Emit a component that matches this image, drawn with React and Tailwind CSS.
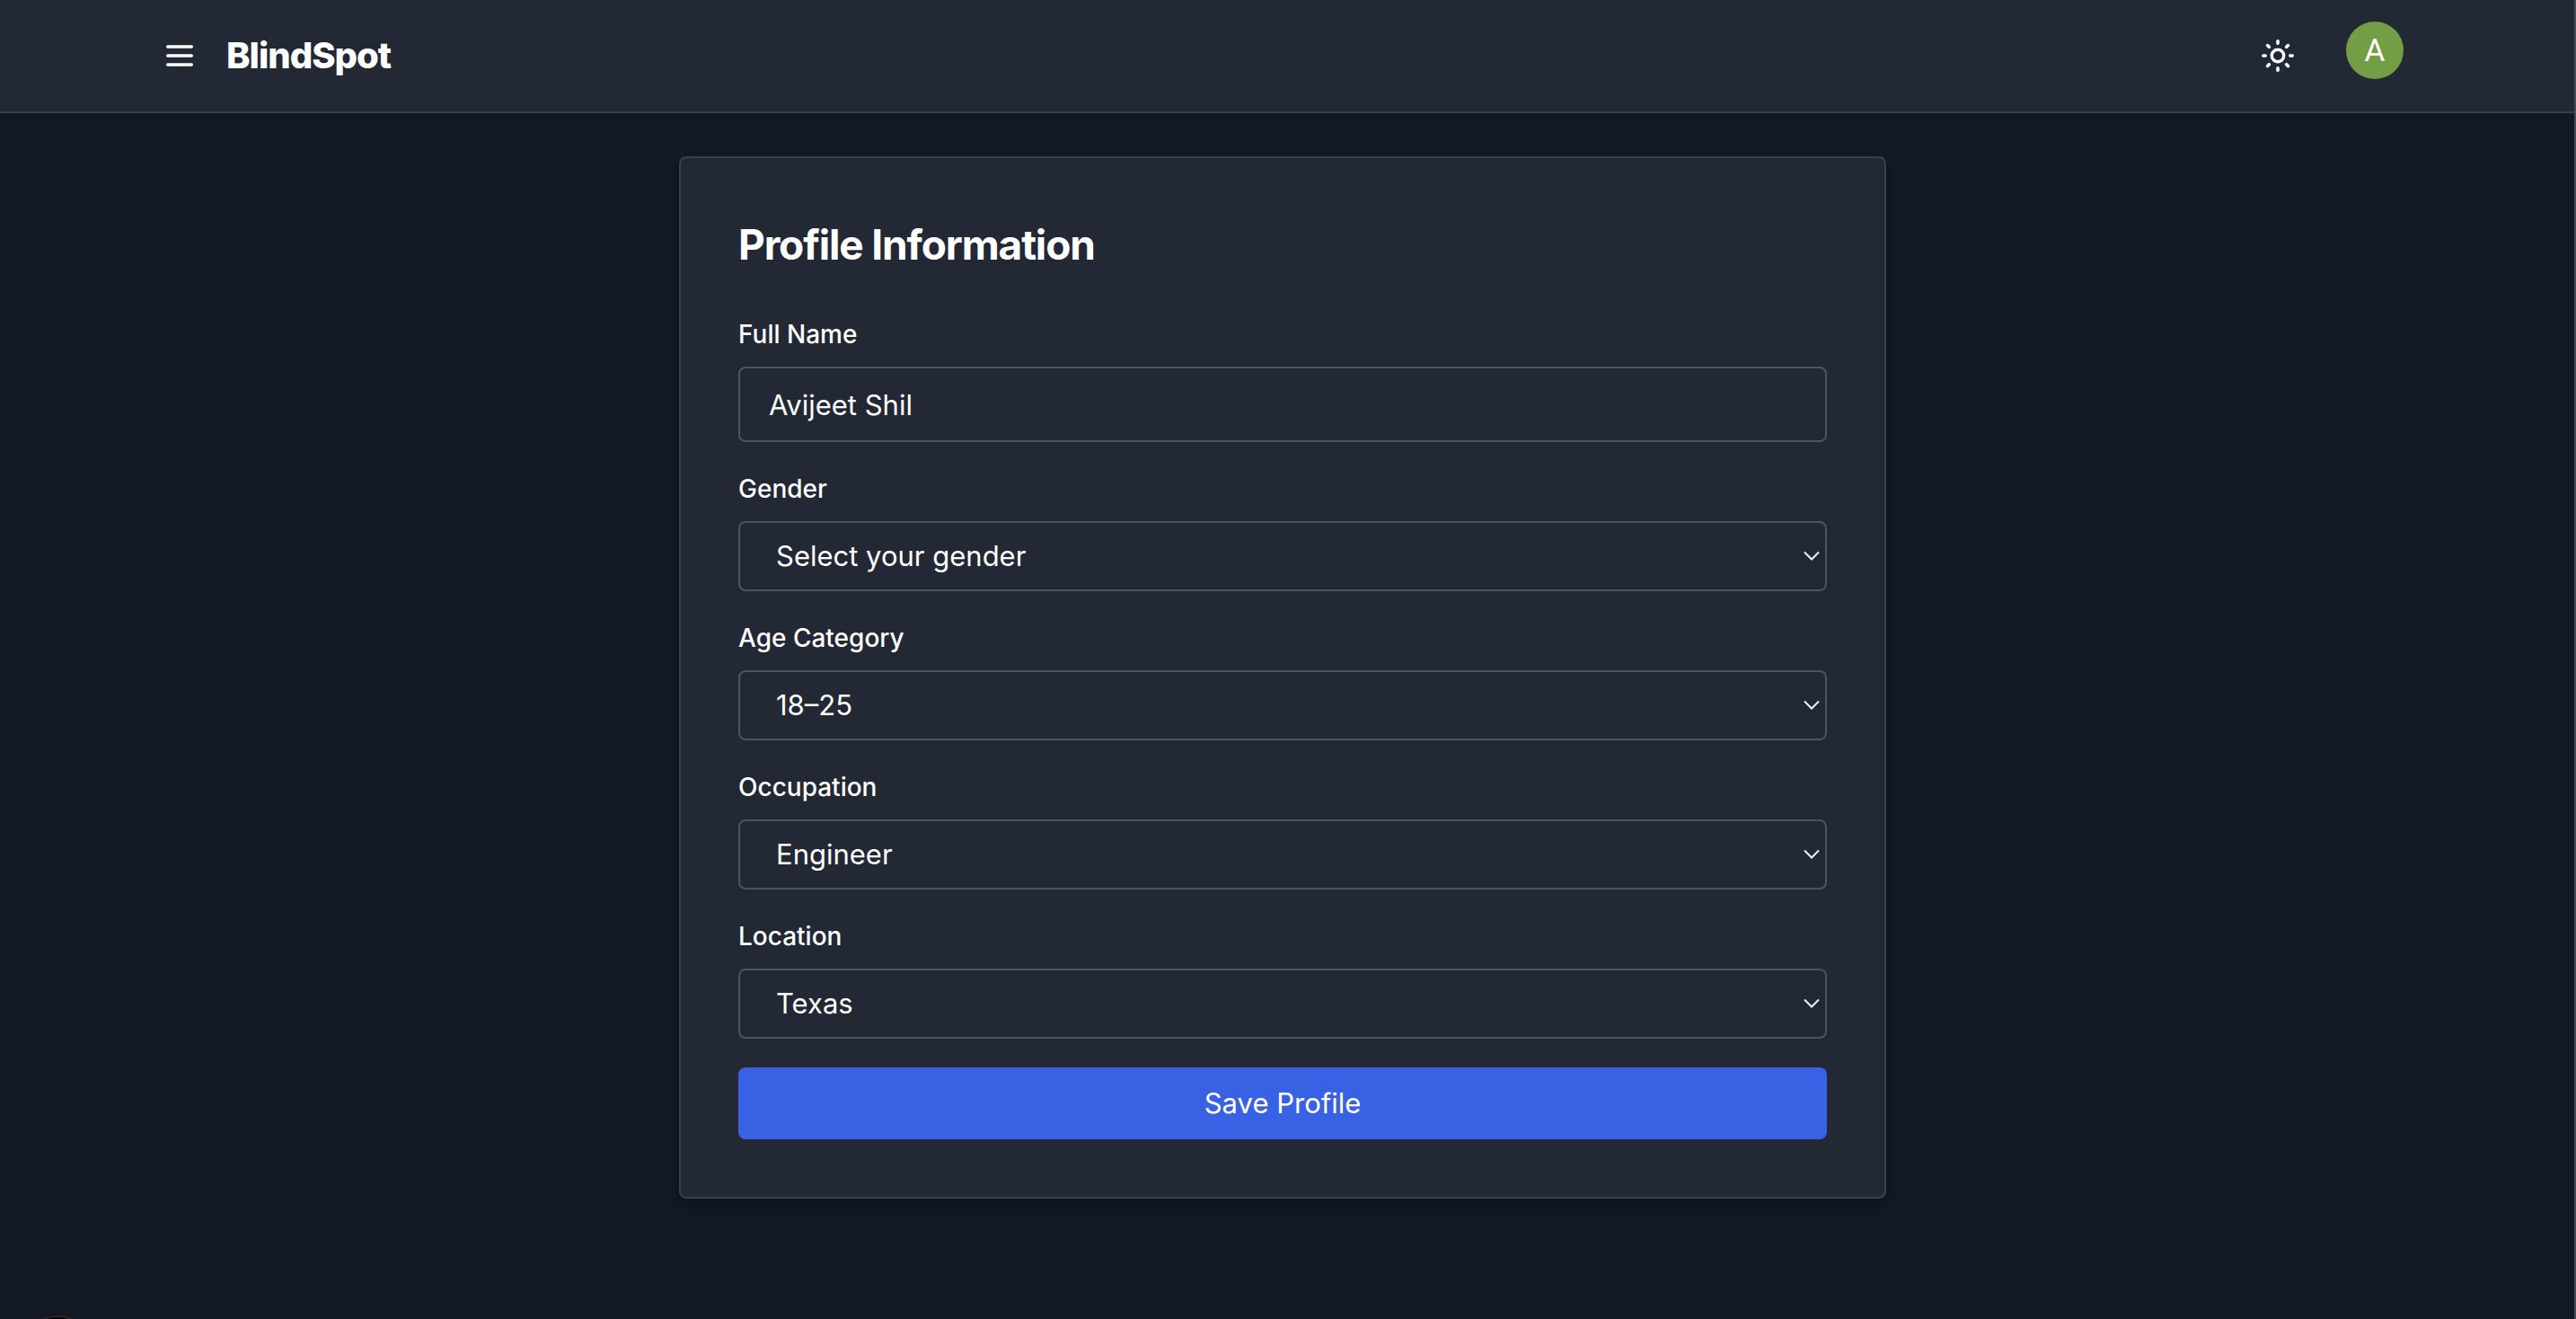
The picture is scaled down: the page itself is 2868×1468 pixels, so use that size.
const fields = [
  { id: "gender", label: "Gender", value: "Select your gender", options: ["Select your gender", "Male", "Female", "Other"] },
  { id: "age", label: "Age Category", value: "18–25", options: ["18–25", "26–35", "36–50", "51+"] },
  { id: "occupation", label: "Occupation", value: "Engineer", options: ["Engineer", "Teacher", "Student", "Other"] },
  { id: "location", label: "Location", value: "Texas", options: ["Texas", "California", "New York", "Other"] },
];

function MenuIcon() {
  return (
    <svg viewBox="0 0 24 24" fill="none" stroke="currentColor" strokeWidth="2" strokeLinecap="round" className="size-10" aria-hidden="true">
      <path d="M4 6h16M4 12h16M4 18h16" />
    </svg>
  );
}

function SunIcon() {
  return (
    <svg viewBox="0 0 40 40" fill="none" stroke="currentColor" strokeWidth="3.6" strokeLinecap="round" className="size-10" aria-hidden="true">
      <circle cx="20" cy="20" r="6.7" strokeWidth="3.4" />
      <path d="M20 3.8v2.4M20 33.8v2.4M3.8 20h2.4M33.8 20h2.4M8.6 8.6l1.7 1.7M29.7 29.7l1.7 1.7M8.6 31.4l1.7-1.7M29.7 10.3l1.7-1.7" />
    </svg>
  );
}

function SelectField({ id, label, value, options }) {
  return (
    <div className="flex flex-col gap-4">
      <label htmlFor={id} className="text-[28px] leading-10 font-medium">{label}</label>
      <div className="relative">
        <select
          id={id}
          defaultValue={value}
          className="block h-[78px] w-full appearance-none rounded-lg border-2 border-[#4d5460] bg-[#222834] px-10 text-[31px] text-white"
        >
          {options.map((option) => (
            <option key={option}>{option}</option>
          ))}
        </select>
        <svg viewBox="0 0 18 12" fill="none" stroke="#f1f1f1" strokeWidth="2" className="pointer-events-none absolute top-1/2 right-2 h-3 w-[18px] -translate-y-1/2" aria-hidden="true">
          <path d="M1 1.5l8 8 8-8" />
        </svg>
      </div>
    </div>
  );
}

export default function App() {
  return (
    <div className="relative min-h-screen overflow-hidden border-r-2 border-[#444b58] bg-[#121824] font-['Inter',sans-serif] text-white">
      <header className="border-b-2 border-[#3a414d] bg-[#222834] pr-[10px]">
        <div className="mx-auto flex h-[124px] max-w-[2560px] items-center justify-between px-8">
          <div className="flex items-center gap-8">
            <button type="button" aria-label="Open menu"><MenuIcon /></button>
            <a href="#" className="text-[40px] leading-14 font-extrabold tracking-tight">BlindSpot</a>
          </div>
          <div className="flex items-center gap-14">
            <button type="button" aria-label="Toggle theme"><SunIcon /></button>
            <button type="button" aria-label="Account" className="mb-3 flex size-16 items-center justify-center rounded-full bg-[#739e46] font-['Roboto',sans-serif] text-[35px] leading-none">A</button>
          </div>
        </div>
      </header>
      <main className="pt-12 pr-[10px]">
        <section className="mx-auto max-w-[1344px] rounded-lg border-2 border-[#3a414d] bg-[#222834] p-16 shadow-[0_8px_12px_-2px_rgba(0,0,0,0.1),0_4px_8px_-4px_rgba(0,0,0,0.1)]">
          <h1 className="mb-12 text-[46px] leading-16 font-bold tracking-tight">Profile Information</h1>
          <form className="flex flex-col gap-8">
            <div className="flex flex-col gap-4">
              <label htmlFor="name" className="text-[28px] leading-10 font-medium">Full Name</label>
              <input id="name" type="text" defaultValue="Avijeet Shil" className="h-[84px] w-full rounded-lg border-2 border-[#4d5460] bg-[#222834] px-8 text-[31px]" />
            </div>
            {fields.map((field) => (
              <SelectField key={field.id} {...field} />
            ))}
            <button type="button" className="h-20 w-full rounded-lg bg-[#3861e3] text-[31px]">Save Profile</button>
          </form>
        </section>
      </main>
      <div className="absolute -bottom-19 left-6 size-20 rounded-full border-2 border-[#2c2423] bg-black" />
    </div>
  );
}
